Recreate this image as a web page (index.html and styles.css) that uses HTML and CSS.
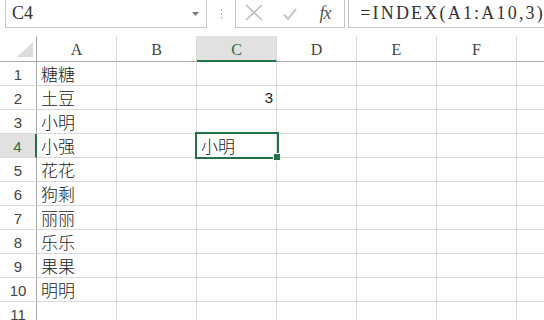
FILE: index.html
```html
<!DOCTYPE html>
<html lang="zh-CN">
<head>
    <meta charset="UTF-8">
    <meta name="viewport" content="width=device-width, initial-scale=1.0">
    <title>INDEX</title>
    <link rel="stylesheet" href="styles.css">
</head>
<body>
    <div class="formula-bar">
        <div class="name-box">
            <span>C4</span>
            <svg class="arrow" width="7" height="4" viewBox="0 0 7 4"><path d="M0 0h7L3.5 4z" fill="#777"/></svg>
        </div>
        <svg class="grip" width="3" height="12" viewBox="0 0 3 12">
            <rect x="1" y="1" width="1.5" height="1.5" fill="#a0a0a0"/>
            <rect x="1" y="5" width="1.5" height="1.5" fill="#a0a0a0"/>
            <rect x="1" y="9" width="1.5" height="1.5" fill="#a0a0a0"/>
        </svg>
        <div class="buttons">
            <svg class="cancel" width="18" height="17" viewBox="0 0 18 17"><path d="M1 1l16 15M17 1L1 16" stroke="#bdbdbd" stroke-width="1.6" fill="none"/></svg>
            <svg class="enter" width="14" height="12" viewBox="0 0 14 12"><path d="M1 6.5l4 4.5L13 1" stroke="#c4c4c4" stroke-width="2" fill="none"/></svg>
            <span class="fx">fx</span>
        </div>
        <div class="formula">=INDEX(A1:A10,3)</div>
    </div>

    <div class="sheet">
        <div class="row head">
            <div class="rh corner"><svg width="16" height="15" viewBox="0 0 16 15"><path d="M16 0v15H0z" fill="#dcdcdc"/></svg></div>
            <div class="c">A</div>
            <div class="c">B</div>
            <div class="c active">C</div>
            <div class="c">D</div>
            <div class="c">E</div>
            <div class="c">F</div>
            <div class="c"></div>
        </div>
        <div class="row">
            <div class="rh">1</div>
            <div class="c txt">糖糖</div><div class="c"></div><div class="c"></div><div class="c"></div><div class="c"></div><div class="c"></div><div class="c"></div>
        </div>
        <div class="row">
            <div class="rh">2</div>
            <div class="c txt">土豆</div><div class="c"></div><div class="c num">3</div><div class="c"></div><div class="c"></div><div class="c"></div><div class="c"></div>
        </div>
        <div class="row">
            <div class="rh">3</div>
            <div class="c txt">小明</div><div class="c"></div><div class="c"></div><div class="c"></div><div class="c"></div><div class="c"></div><div class="c"></div>
        </div>
        <div class="row">
            <div class="rh active">4</div>
            <div class="c txt">小强</div><div class="c"></div><div class="c txt sel">小明</div><div class="c"></div><div class="c"></div><div class="c"></div><div class="c"></div>
        </div>
        <div class="row">
            <div class="rh">5</div>
            <div class="c txt">花花</div><div class="c"></div><div class="c"></div><div class="c"></div><div class="c"></div><div class="c"></div><div class="c"></div>
        </div>
        <div class="row">
            <div class="rh">6</div>
            <div class="c txt">狗剩</div><div class="c"></div><div class="c"></div><div class="c"></div><div class="c"></div><div class="c"></div><div class="c"></div>
        </div>
        <div class="row">
            <div class="rh">7</div>
            <div class="c txt">丽丽</div><div class="c"></div><div class="c"></div><div class="c"></div><div class="c"></div><div class="c"></div><div class="c"></div>
        </div>
        <div class="row">
            <div class="rh">8</div>
            <div class="c txt">乐乐</div><div class="c"></div><div class="c"></div><div class="c"></div><div class="c"></div><div class="c"></div><div class="c"></div>
        </div>
        <div class="row">
            <div class="rh">9</div>
            <div class="c txt">果果</div><div class="c"></div><div class="c"></div><div class="c"></div><div class="c"></div><div class="c"></div><div class="c"></div>
        </div>
        <div class="row">
            <div class="rh">10</div>
            <div class="c txt">明明</div><div class="c"></div><div class="c"></div><div class="c"></div><div class="c"></div><div class="c"></div><div class="c"></div>
        </div>
        <div class="row">
            <div class="rh">11</div>
            <div class="c"></div><div class="c"></div><div class="c"></div><div class="c"></div><div class="c"></div><div class="c"></div><div class="c"></div>
        </div>
    </div>
</body>
</html>
```

FILE: styles.css
```css
body {
    margin: 0;
    width: 544px;
    height: 320px;
    overflow: hidden;
    background: #ffffff;
    color: #333333;
    font-family: "Liberation Serif", serif;
}

/* formula bar */

.formula-bar {
    display: flex;
    align-items: flex-start;
    height: 36px;
}

.name-box,
.buttons,
.formula {
    box-sizing: border-box;
    height: 29px;
    margin-top: -1px;
    border: 1px solid #c6c6c6;
    display: flex;
    align-items: center;
}

.name-box {
    width: 204px;
    margin-left: 5px;
    padding: 0 7px 0 6px;
    justify-content: space-between;
    font-family: "Liberation Serif", serif;
    font-size: 18px;
    color: #333333;
}

.grip {
    margin: 8px 13px 0 13px;
}

.buttons {
    width: 111px;
    padding-left: 9px;
}

.cancel {
    margin-top: -2px;
}

.enter {
    margin-left: 20px;
}

.fx {
    margin-left: 22px;
    font-style: italic;
    font-size: 18px;
    color: #555555;
    letter-spacing: -1px;
}

.formula {
    flex: 1;
    margin-left: 3px;
    margin-right: -2px;
    padding-left: 11px;
    font-family: "Liberation Serif", serif;
    font-size: 18px;
    letter-spacing: 2.2px;
    color: #333333;
}

/* grid */

.sheet {
    overflow: hidden;
}

.row {
    display: flex;
    height: 24px;
}

.row.head {
    height: 26px;
}

.rh,
.c {
    flex: none;
    box-sizing: border-box;
    border-bottom: 1px solid #d9d9d9;
    display: flex;
    align-items: center;
}

.rh {
    width: 37px;
    justify-content: center;
    border-right: 1px solid #ababab;
    font-family: "Liberation Sans", sans-serif;
    font-size: 15px;
    color: #444444;
    padding-top: 1px;
}

.c {
    width: 80px;
    border-right: 1px solid #d9d9d9;
}

.head .rh,
.head .c {
    border-bottom-color: #ababab;
}

.head .c {
    justify-content: center;
    font-family: "Liberation Serif", serif;
    font-size: 16px;
    color: #444444;
    padding-top: 3px;
}

.corner {
    align-items: flex-end;
    justify-content: flex-end;
    padding: 0 3px 4px 0;
}

.head .c.active {
    background: #e1e1e1;
    color: #217346;
    border-bottom: 2px solid #217346;
}

.rh.active {
    background: #e1e1e1;
    color: #217346;
    border-right: 2px solid #217346;
}

.txt {
    padding-left: 4px;
    font-family: "Noto Sans CJK SC", sans-serif;
    font-weight: 300;
    font-size: 17px;
    color: #222222;
}

.num {
    justify-content: flex-end;
    padding-right: 3px;
    font-family: "Liberation Sans", sans-serif;
    font-size: 15px;
    color: #222222;
}

.sel {
    position: relative;
}

.sel::after {
    content: "";
    position: absolute;
    left: -2px;
    top: -2px;
    width: 84px;
    height: 27px;
    box-sizing: border-box;
    border: 2px solid #217346;
}

.sel::before {
    content: "";
    position: absolute;
    left: 77px;
    top: 20px;
    width: 6px;
    height: 6px;
    background: #217346;
    box-shadow: 0 0 0 1px #ffffff;
    z-index: 1;
}
```
